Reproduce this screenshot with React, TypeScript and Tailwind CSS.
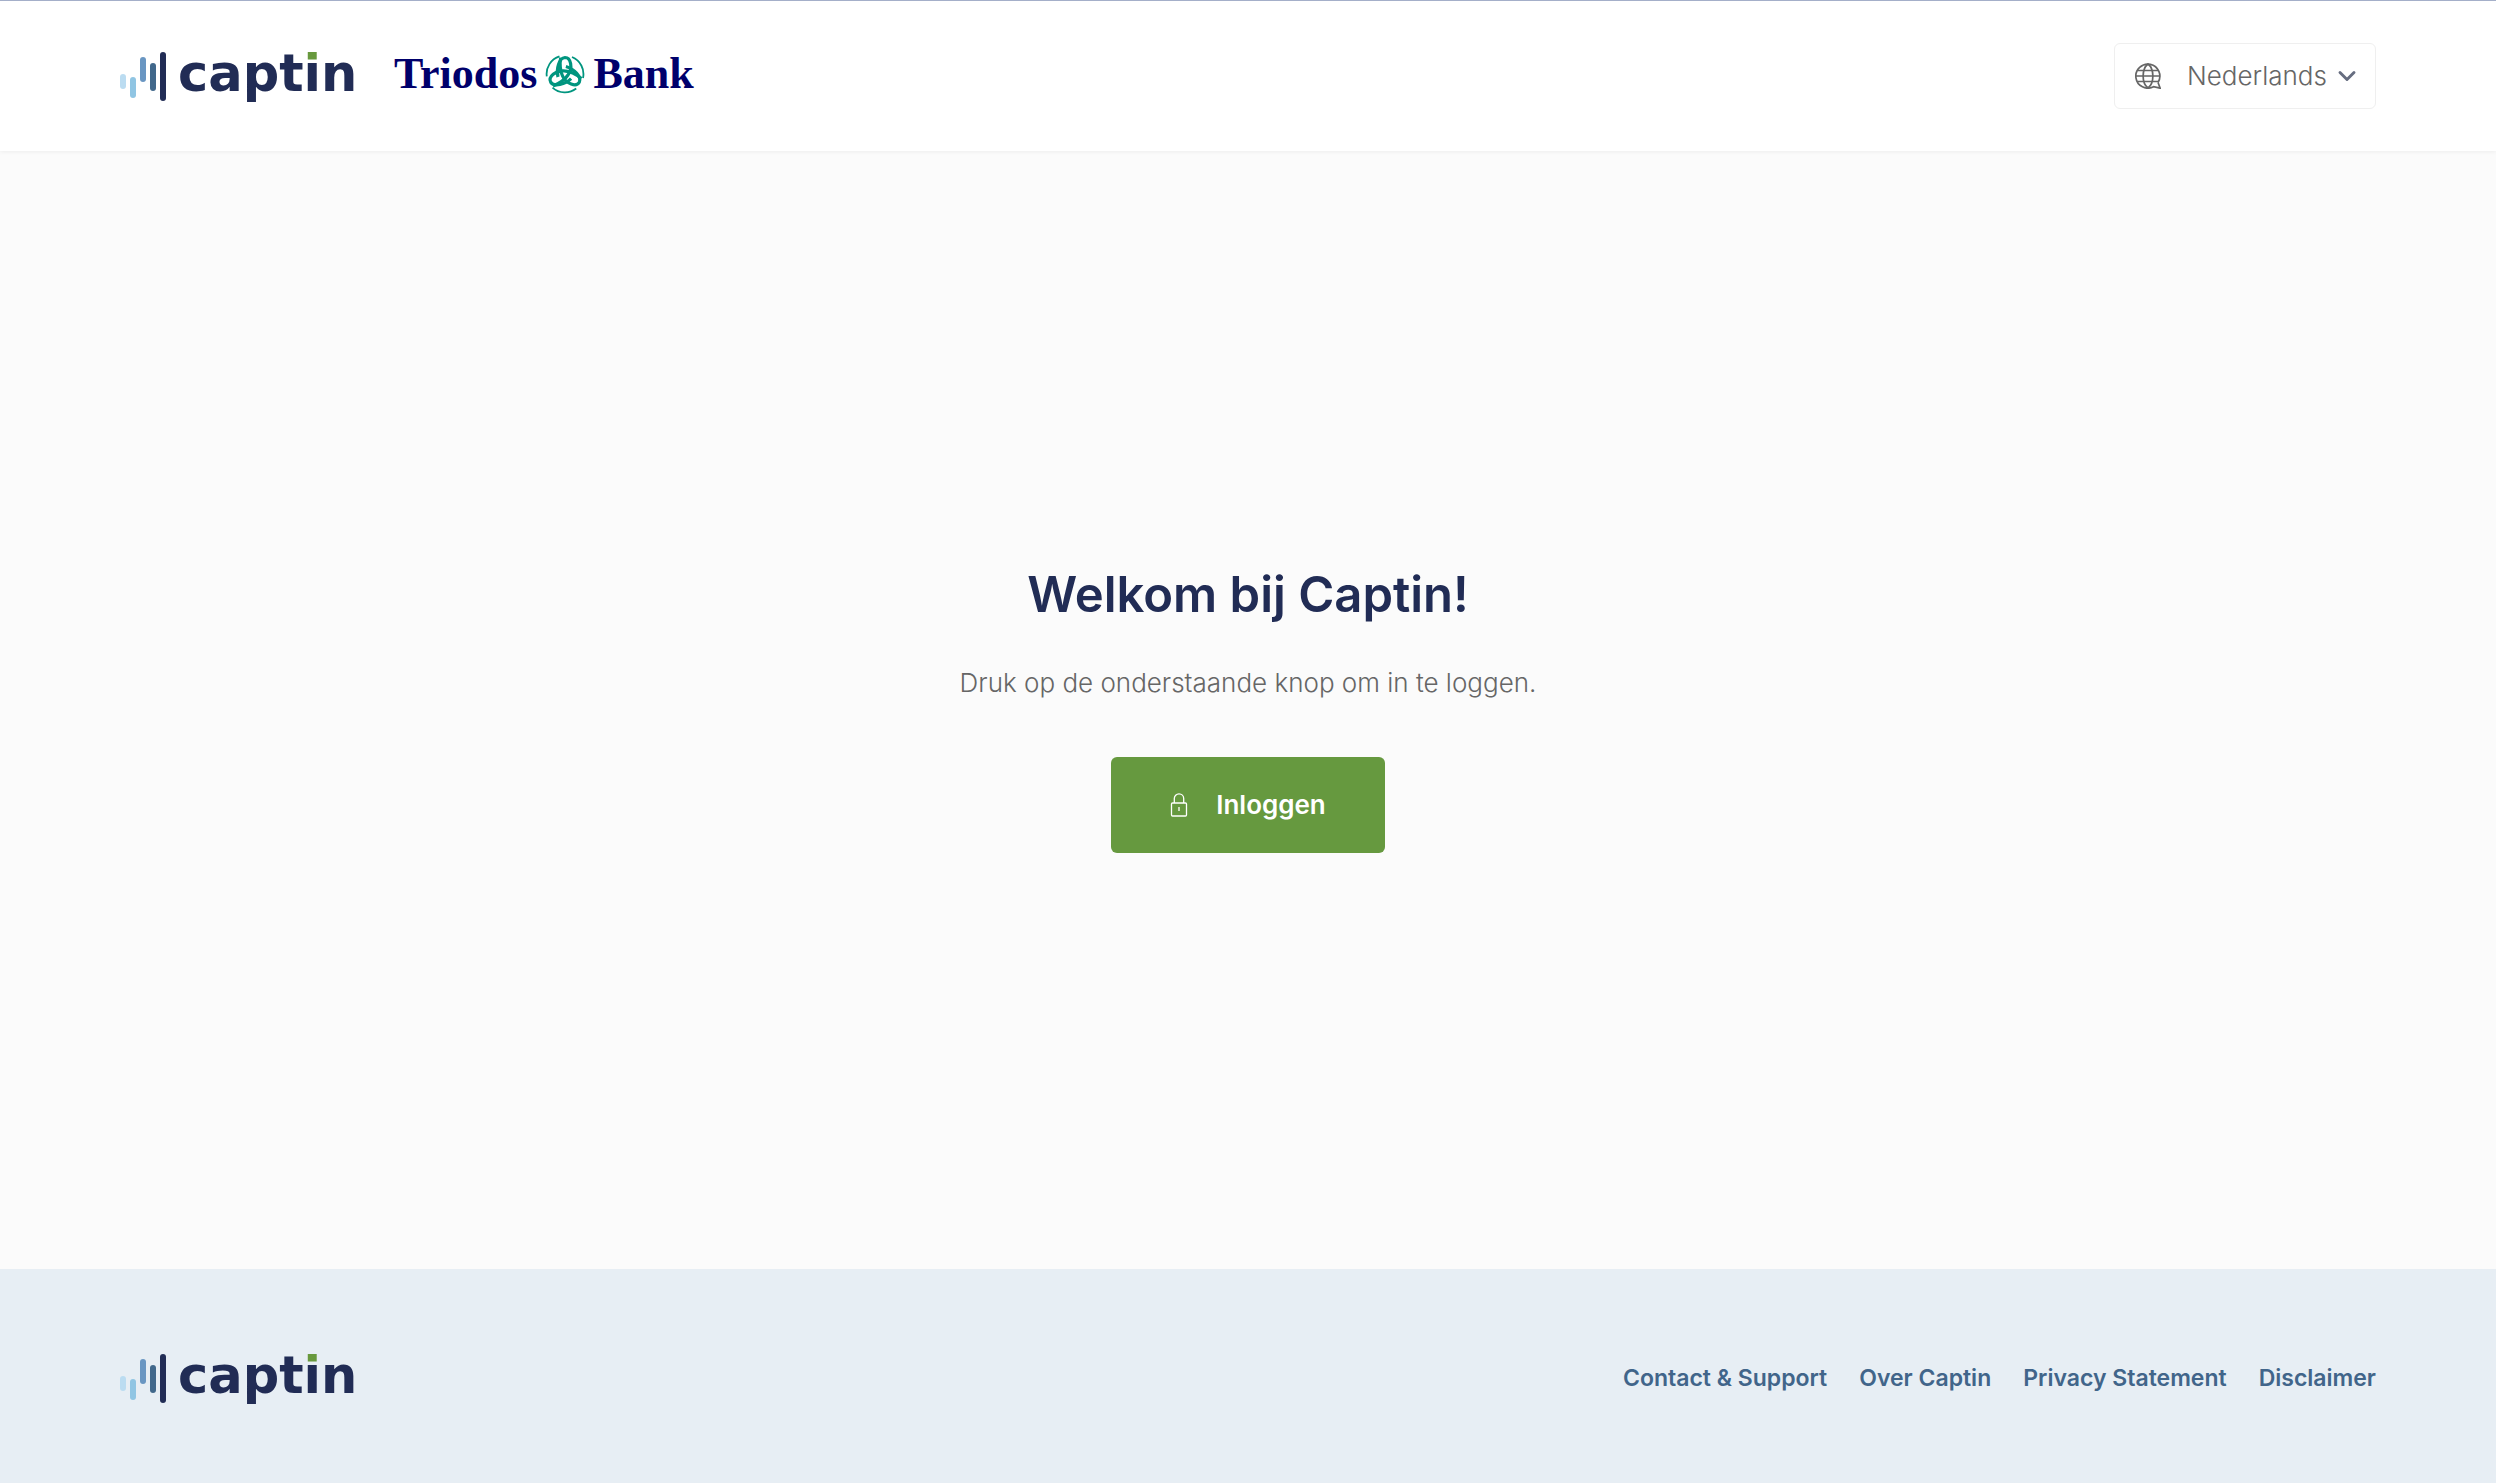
import { useId } from "react";
import { ChevronDown } from "lucide-react";

const footerLinks = ["Contact & Support", "Over Captin", "Privacy Statement", "Disclaimer"];

function CaptinLogo() {
  const dotFill = useId();

  return (
    <svg className="h-[52px] w-[240px] shrink-0 overflow-visible" viewBox="0 0 240 52" role="img" aria-label="captin">
      <defs>
        {/* green dot on the i, navy stem */}
        <linearGradient id={dotFill} gradientUnits="userSpaceOnUse" x1="0" y1="0" x2="0" y2="52">
          <stop offset="0.22" stopColor="#68993d" />
          <stop offset="0.22" stopColor="#212c55" />
        </linearGradient>
      </defs>
      <rect x="0" y="24" width="6" height="15" rx="3" fill="#bbdcf1" />
      <rect x="10" y="27" width="6" height="21" rx="3" fill="#90c5e3" />
      <rect x="20" y="7" width="6" height="25" rx="3" fill="#6996c2" />
      <rect x="30" y="13" width="6" height="28" rx="3" fill="#41688b" />
      <rect x="40" y="2" width="6" height="49" rx="3" fill="#212c55" />
      <text x="58" y="41" fontSize="51" fontWeight="700" fill="#212c55" className="font-['DejaVu_Sans',sans-serif]">
        capt<tspan fill={`url(#${dotFill})`}>i</tspan>n
      </text>
    </svg>
  );
}

function TriodosMark() {
  return (
    <svg className="h-10 w-10 shrink-0" viewBox="-20 -20 40 40" fill="none" stroke="#00957f" aria-hidden="true">
      {[0, 120, 240].map((angle) => (
        <g key={angle} transform={`rotate(${angle})`}>
          <path d="M-7 3C-9-5-6-16 0-16.500C6-16.500 8-6 3 1C-1 7-7 10-12 12" strokeWidth="3.2" />
          <path d="M7-17A18.400 18.400 0 0 1 18 4" strokeWidth="1.8" />
        </g>
      ))}
    </svg>
  );
}

function TriodosLogo() {
  return (
    <div className="flex items-center gap-2 pb-1 font-['Liberation_Serif',serif] text-[44px] leading-[52px] font-bold text-[#00006b]">
      <span>Triodos</span>
      <TriodosMark />
      <span>Bank</span>
    </div>
  );
}

function GlobeIcon() {
  return (
    <svg className="h-[26px] w-[26px] shrink-0" viewBox="0 0 26 26" fill="none" stroke="#666" strokeWidth="1.7" aria-hidden="true">
      <path d="M23 19.500A12 12 0 1 0 18.500 23.700L25.200 25.200L23 19.500" />
      <path d="M13 1C6.500 6 6.500 20 13 25C19.500 20 19.500 6 13 1Z" />
      <path d="M2.500 7.500H23.500M1 13H25M2.500 18.500H23" />
    </svg>
  );
}

function LockIcon() {
  return (
    <svg className="h-6 w-[18px] shrink-0" viewBox="0 0 18 24" fill="none" stroke="currentColor" strokeWidth="1.3" aria-hidden="true">
      <rect x="1.500" y="10" width="15" height="13" rx="1" />
      <path d="M4.300 10V5.500a4.700 4.700 0 0 1 9.400 0V10M9 14v4" />
    </svg>
  );
}

export default function App() {
  return (
    <div className="flex min-h-screen flex-col bg-[#fbfbfb] font-['Inter',sans-serif]">
      {/* Header */}
      <header className="flex items-center justify-between border-t border-[#a4afc9] bg-white px-[120px] py-[42px] shadow-[0_1px_4px_rgba(0,0,0,0.06)]">
        <div className="flex items-center gap-[34px]">
          <CaptinLogo />
          <TriodosLogo />
        </div>
        <label className="relative flex items-center rounded-md border border-[#efefef] pl-5">
          <GlobeIcon />
          <select
            aria-label="Taal"
            defaultValue="nl"
            className="appearance-none bg-transparent py-[14px] pr-12 pl-[26px] text-[26px] leading-9 font-light text-[#666]"
          >
            <option value="nl">Nederlands</option>
            <option value="en">English</option>
          </select>
          <ChevronDown className="pointer-events-none absolute right-[14px] h-7 w-7 text-[#666d80]" strokeWidth={2.500} />
        </label>
      </header>

      {/* Main Content */}
      <main className="flex flex-1 flex-col items-center justify-center">
        <h1 className="text-[49px] leading-[56px] font-semibold text-[#212c55]">Welkom bij Captin!</h1>
        <p className="mt-[42px] text-[26px] leading-9 font-light text-[#666]">Druk op de onderstaande knop om in te loggen.</p>
        <button type="button" className="mt-14 flex items-center gap-7 rounded-md bg-[#66993f] px-[59px] py-[30px] text-[26px] leading-9 font-semibold text-white">
          <LockIcon />
          Inloggen
        </button>
      </main>

      {/* Footer */}
      <footer className="flex items-center justify-between bg-[#e7eef4] px-[120px] pt-[83px] pb-[79px]">
        <CaptinLogo />
        <nav className="flex gap-8 text-[23px] leading-8 font-semibold text-[#41658a]">
          {footerLinks.map((link) => (
            <a key={link} href="#">{link}</a>
          ))}
        </nav>
      </footer>
    </div>
  );
}
